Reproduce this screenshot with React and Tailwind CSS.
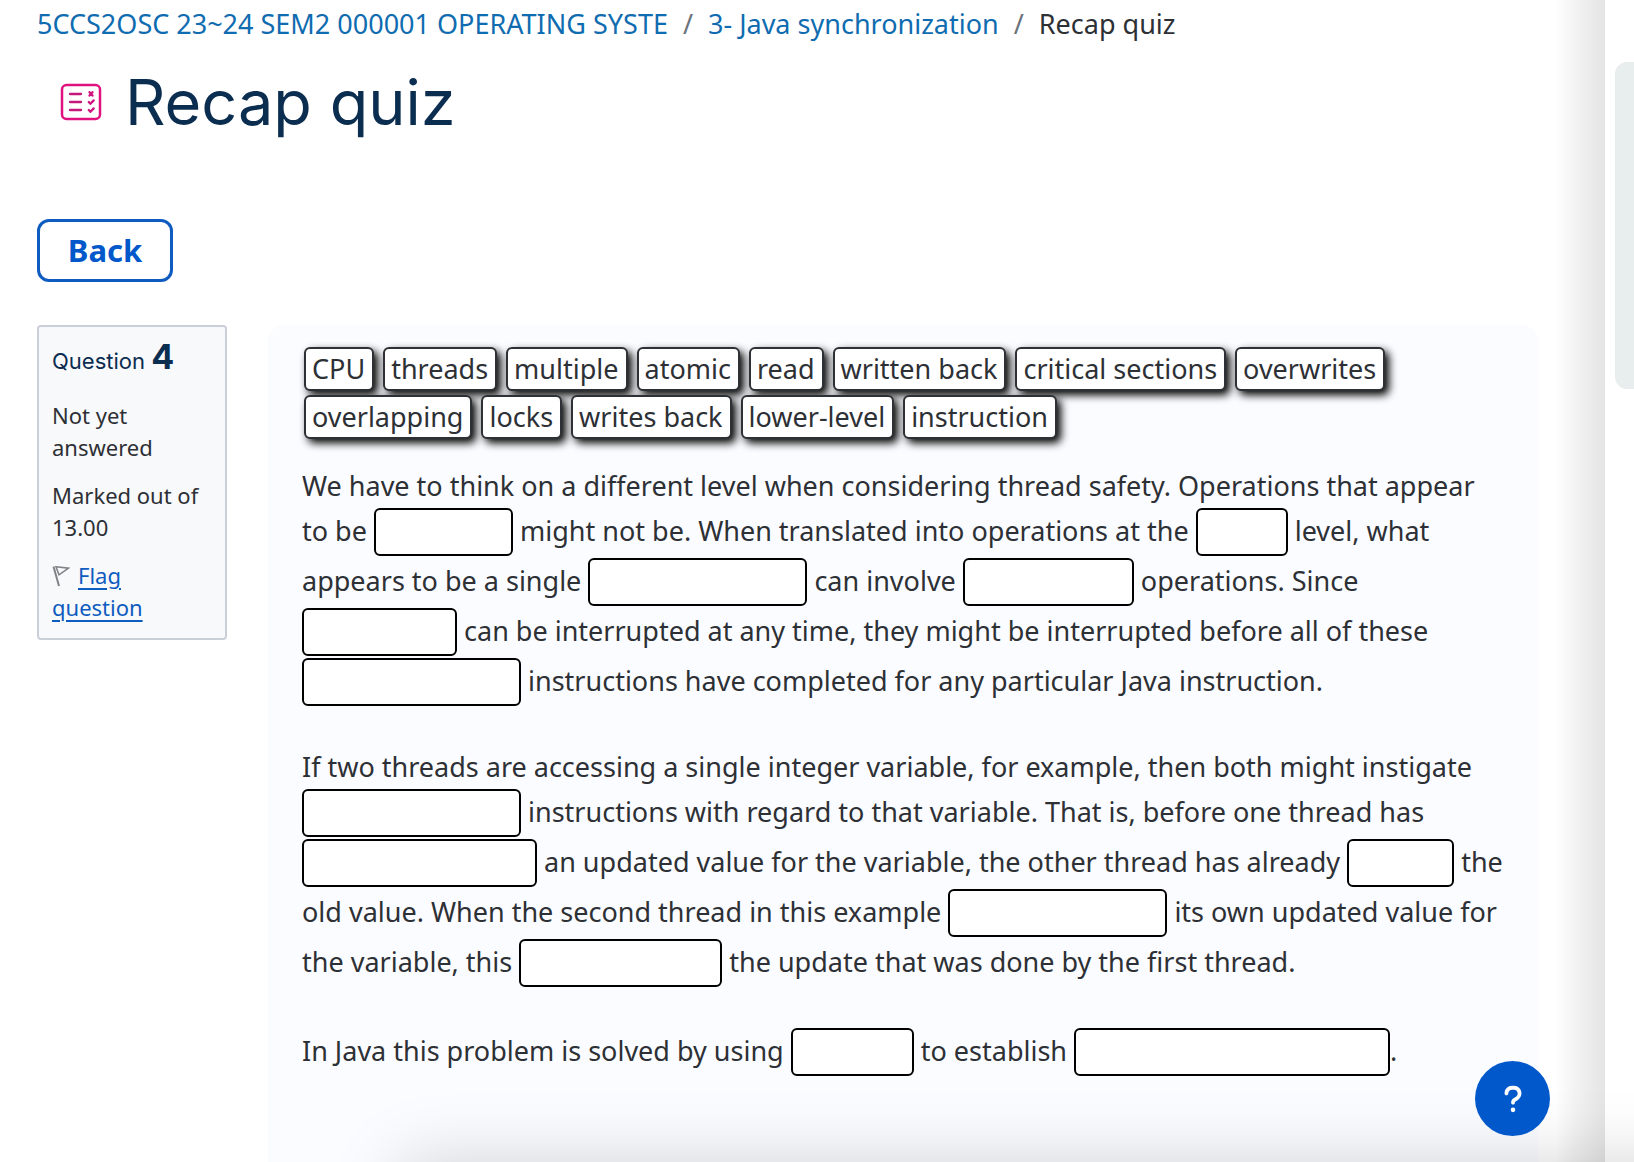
import { FaQuestion } from "react-icons/fa6";

const CHOICES = [
  "CPU",
  "threads",
  "multiple",
  "atomic",
  "read",
  "written back",
  "critical sections",
  "overwrites",
  "overlapping",
  "locks",
  "writes back",
  "lower-level",
  "instruction",
];

function Blank({ n, width }) {
  return (
    <input
      type="text"
      readOnly
      aria-label={`Blank ${n}`}
      className={`${width} my-px h-12 rounded-md border-2 border-black bg-white px-1 pb-1 text-[27px] leading-[40px] align-baseline`}
    />
  );
}

function QuizIcon() {
  return (
    <svg
      viewBox="0 0 42 38"
      className="h-[38px] w-[42px]"
      fill="none"
      stroke="#e0127f"
      strokeLinecap="round"
      strokeLinejoin="round"
      aria-hidden="true"
    >
      <rect x="2" y="2" width="38" height="34" rx="4.500" strokeWidth="2.500" />
      <g stroke="#c4187a" strokeWidth="2.300">
        <path d="M10 11h11M10 19h11M10 27h11" />
      </g>
      <g stroke="#cf1380" strokeWidth="2.300">
        <path d="M29.500 9.200l3 3.400M32.500 9.200l-3 3.400" />
        <path d="M28.800 19l1.600 1.800 3.300-3.400" />
        <path d="M28.800 27l1.600 1.800 3.300-3.400" />
      </g>
    </svg>
  );
}

function FlagIcon() {
  return (
    <svg
      viewBox="0 0 18 22"
      className="mr-2 inline-block h-[22px] w-[18px] align-[-3px]"
      fill="none"
      stroke="#808386"
      strokeWidth="1.500"
      aria-hidden="true"
    >
      <path d="M1.500 1.500L7 21" strokeWidth="2" />
      <path d="M4 1.800L16.500 3.200 7 9.800z" />
    </svg>
  );
}

function QuestionInfo() {
  return (
    <section className="w-[190px] shrink-0 rounded-sm border-2 border-[#cad0d7] bg-[#f8f9fb] px-[13px] pt-2.5 pb-[15px] text-[22px] leading-8">
      <h2 className="mb-[18px] font-[Inter,sans-serif] leading-10 text-[#0a2d50]">
        Question <span className="text-[34px] font-bold">4</span>
      </h2>
      <p className="mb-4">Not yet answered</p>
      <p className="mb-4">Marked out of 13.00</p>
      <p>
        <FlagIcon />
        <a href="#flag" className="text-[#0f5cc0] underline underline-offset-4">
          Flag question
        </a>
      </p>
    </section>
  );
}

export default function App() {
  return (
    <div className="flex min-h-screen bg-white font-['Noto_Sans',sans-serif] text-[#2d3035]">
      <main className="flex min-w-0 flex-1 flex-col pl-[37px]">
        <nav aria-label="Breadcrumb" className="pt-[3px]">
          <ol className="flex text-[27px] leading-[42px]">
            <li>
              <a href="#course" className="text-[#0f6cb0]">
                5CCS2OSC 23~24 SEM2 000001 OPERATING SYSTE
              </a>
            </li>
            <li className="px-[15px] text-[#6a737b]" aria-hidden="true">/</li>
            <li>
              <a href="#section" className="text-[#0f6cb0]">
                3- Java synchronization
              </a>
            </li>
            <li className="px-[15px] text-[#6a737b]" aria-hidden="true">/</li>
            <li>Recap quiz</li>
          </ol>
        </nav>

        <header className="mt-[15px] flex items-center gap-[23px] pl-[23px]">
          <QuizIcon />
          <h1 className="font-[Inter,sans-serif] text-[63px] leading-[84px] text-[#0a2d50]">
            Recap quiz
          </h1>
        </header>

        <button
          type="button"
          className="mt-[75px] h-[63px] w-[136px] rounded-xl border-3 border-[#0f5cc0] text-[31px] font-bold text-[#0058cb]"
        >
          Back
        </button>

        <div className="mt-[43px] flex flex-1 items-start gap-[41px]">
          <QuestionInfo />

          <section className="min-w-0 flex-1 self-stretch rounded-t-2xl bg-[#fbfcff] px-[34px] pt-[22px]">
            <ul className="flex flex-wrap gap-x-[9px] gap-y-1 pl-0.5 text-[27px] leading-10">
              {CHOICES.map((word) => (
                <li key={word}>
                  <button
                    type="button"
                    className="block rounded-md border-2 border-[#2d3035] bg-white pr-[7px] pl-1.5 shadow-[4px_4px_8px_#000]"
                  >
                    {word}
                  </button>
                </li>
              ))}
            </ul>

            <div className="mt-[26px] space-y-[39px] text-[27px] leading-[42px]">
              <p>
                We have to think on a different level when considering thread safety. Operations that appear
                to be <Blank n={1} width="w-[139px]" /> might not be. When translated into operations at the{" "}
                <Blank n={2} width="w-[92px]" /> level, what appears to be a single{" "}
                <Blank n={3} width="w-[219px]" /> can involve <Blank n={4} width="w-[171px]" /> operations. Since{" "}
                <Blank n={5} width="w-[155px]" /> can be interrupted at any time, they might be interrupted before all
                of these <Blank n={6} width="w-[219px]" /> instructions have completed for any particular Java
                instruction.
              </p>
              <p>
                If two threads are accessing a single integer variable, for example, then both might instigate{" "}
                <Blank n={7} width="w-[219px]" /> instructions with regard to that variable. That is, before one thread
                has <Blank n={8} width="w-[235px]" /> an updated value for the variable, the other thread has already{" "}
                <Blank n={9} width="w-[107px]" /> the old value. When the second thread in this example{" "}
                <Blank n={10} width="w-[219px]" /> its own updated value for the variable, this{" "}
                <Blank n={11} width="w-[203px]" /> the update that was done by the first thread.
              </p>
              <p>
                In Java this problem is solved by using <Blank n={12} width="w-[123px]" /> to establish{" "}
                <Blank n={13} width="w-[316px]" />.
              </p>
            </div>
          </section>
        </div>
      </main>

      <div className="ml-[17px] w-[50px] shrink-0 bg-linear-to-r from-white via-[#f3f3f3] via-40% to-[#e4e4e4]" />
      <aside className="w-[29px] shrink-0 overflow-hidden pt-[62px] pl-2.5">
        <div className="h-[327px] w-16 rounded-xl bg-[#e8eeed]" />
      </aside>

      <div className="pointer-events-none fixed inset-x-0 bottom-0 h-24 overflow-hidden" aria-hidden="true">
        <div className="mt-24 -mr-24 ml-[400px] h-24 shadow-[0_0_70px_rgba(0,0,0,0.17)]" />
      </div>

      <button
        type="button"
        aria-label="Help"
        className="fixed right-[84px] bottom-[26px] flex size-[75px] items-center justify-center rounded-full bg-[#0058cb] text-[30px] text-white"
      >
        <FaQuestion />
      </button>
    </div>
  );
}
